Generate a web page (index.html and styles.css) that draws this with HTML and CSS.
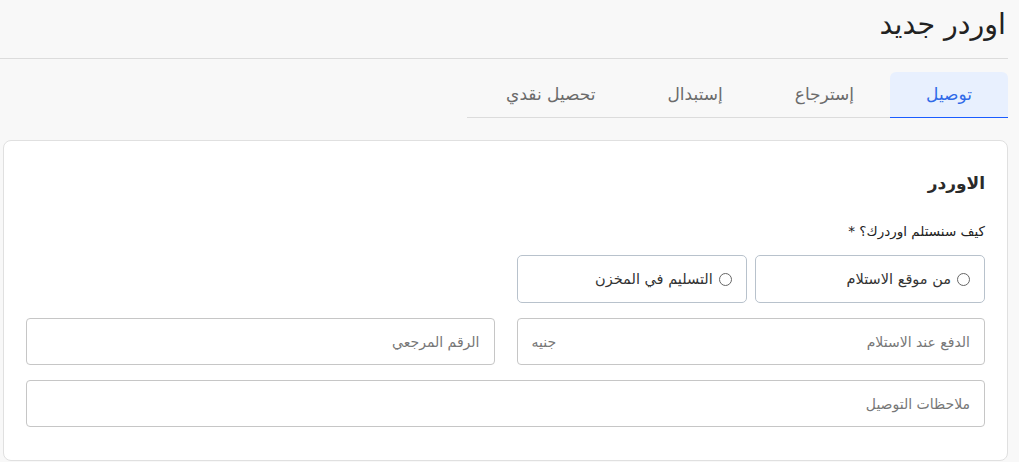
FILE: index.html
```html
<!DOCTYPE html>
<html lang="ar" dir="rtl">
<head>
<meta charset="utf-8">
<title>اوردر جديد</title>
<link rel="stylesheet" href="styles.css">
</head>
<body>
<div class="page">
  <header class="page-header">
    <h1 class="page-title">اوردر جديد</h1>
  </header>
  <nav class="tabs">
    <div class="tab tab-active">توصيل</div>
    <div class="tab">إسترجاع</div>
    <div class="tab">إستبدال</div>
    <div class="tab">تحصيل نقدي</div>
  </nav>
  <section class="card">
    <h2 class="card-title">الاوردر</h2>
    <div class="field-label">كيف سنستلم اوردرك؟ *</div>
    <div class="grid">
      <div class="radio-row">
        <label class="radio-box"><span class="radio-dot"></span><span>من موقع الاستلام</span></label>
        <label class="radio-box"><span class="radio-dot"></span><span>التسليم في المخزن</span></label>
      </div>
      <div></div>
      <div class="input"><span class="ph">الدفع عند الاستلام</span><span class="ph">جنيه</span></div>
      <div class="input"><span class="ph">الرقم المرجعي</span></div>
      <div class="input input-wide"><span class="ph">ملاحظات التوصيل</span></div>
    </div>
  </section>
</div>
</body>
</html>
```

FILE: styles.css
```css
* { box-sizing: border-box; }
html, body { margin: 0; padding: 0; }
body {
  background: #f8f8f8;
  font-family: "DejaVu Sans", sans-serif;
  color: #222;
  width: 1019px;
  height: 462px;
  overflow: hidden;
}
.page {
  margin: 0 11px 0 0;
}
.page-header {
  height: 59px;
  border-bottom: 1px solid #dcdcdc;
  padding-right: 2px;
  padding-top: 5px;
}
.page-title {
  margin: 0;
  font-size: 28.5px;
  font-weight: 400;
  color: #222;
  line-height: 40px;
}
.tabs {
  display: flex;
  width: 541px;
  margin-top: 13px;
  border-bottom: 1px solid #dcdcdc;
  height: 46px;
}
.tab {
  padding: 0 36px;
  height: 45px;
  line-height: 44px;
  font-size: 17px;
  color: #6b6b6b;
  white-space: nowrap;
}
.tab-active {
  background: #e8f0fe;
  color: #2f6ae8;
  border-radius: 6px 6px 0 0;
  border-bottom: 1px solid #1a5cff;
  height: 46px;
}
.card {
  margin-top: 22px;
  margin-left: 3px;
  background: #fff;
  border: 1px solid #e0e0e0;
  border-radius: 8px;
  padding: 22px 22px 33px;
}
.card-title {
  margin: 7px 0 0;
  font-size: 17px;
  font-weight: 600;
  line-height: 26px;
  color: #2a2a2a;
}
.field-label {
  margin-top: 25px;
  font-size: 13.5px;
  line-height: 20px;
  color: #222;
}
.grid {
  margin-top: 14px;
  display: grid;
  grid-template-columns: 1fr 1fr;
  column-gap: 22px;
  row-gap: 15px;
}
.radio-row {
  display: grid;
  grid-template-columns: 1fr 1fr;
  gap: 8px;
}
.radio-box {
  height: 48px;
  border: 1px solid #b8c2cc;
  border-radius: 5px;
  display: flex;
  align-items: center;
  gap: 6px;
  padding: 0 14px;
  font-size: 14.5px;
  color: #333;
}
.radio-dot {
  width: 13px;
  height: 13px;
  border: 1px solid #666;
  border-radius: 50%;
  flex: none;
}
.input {
  height: 47px;
  border: 1px solid #c6c6c6;
  border-radius: 4px;
  display: flex;
  align-items: center;
  justify-content: space-between;
  padding: 0 14px;
}
.input-wide { grid-column: 1 / span 2; }
.ph {
  font-size: 14px;
  color: #777;
}
```
